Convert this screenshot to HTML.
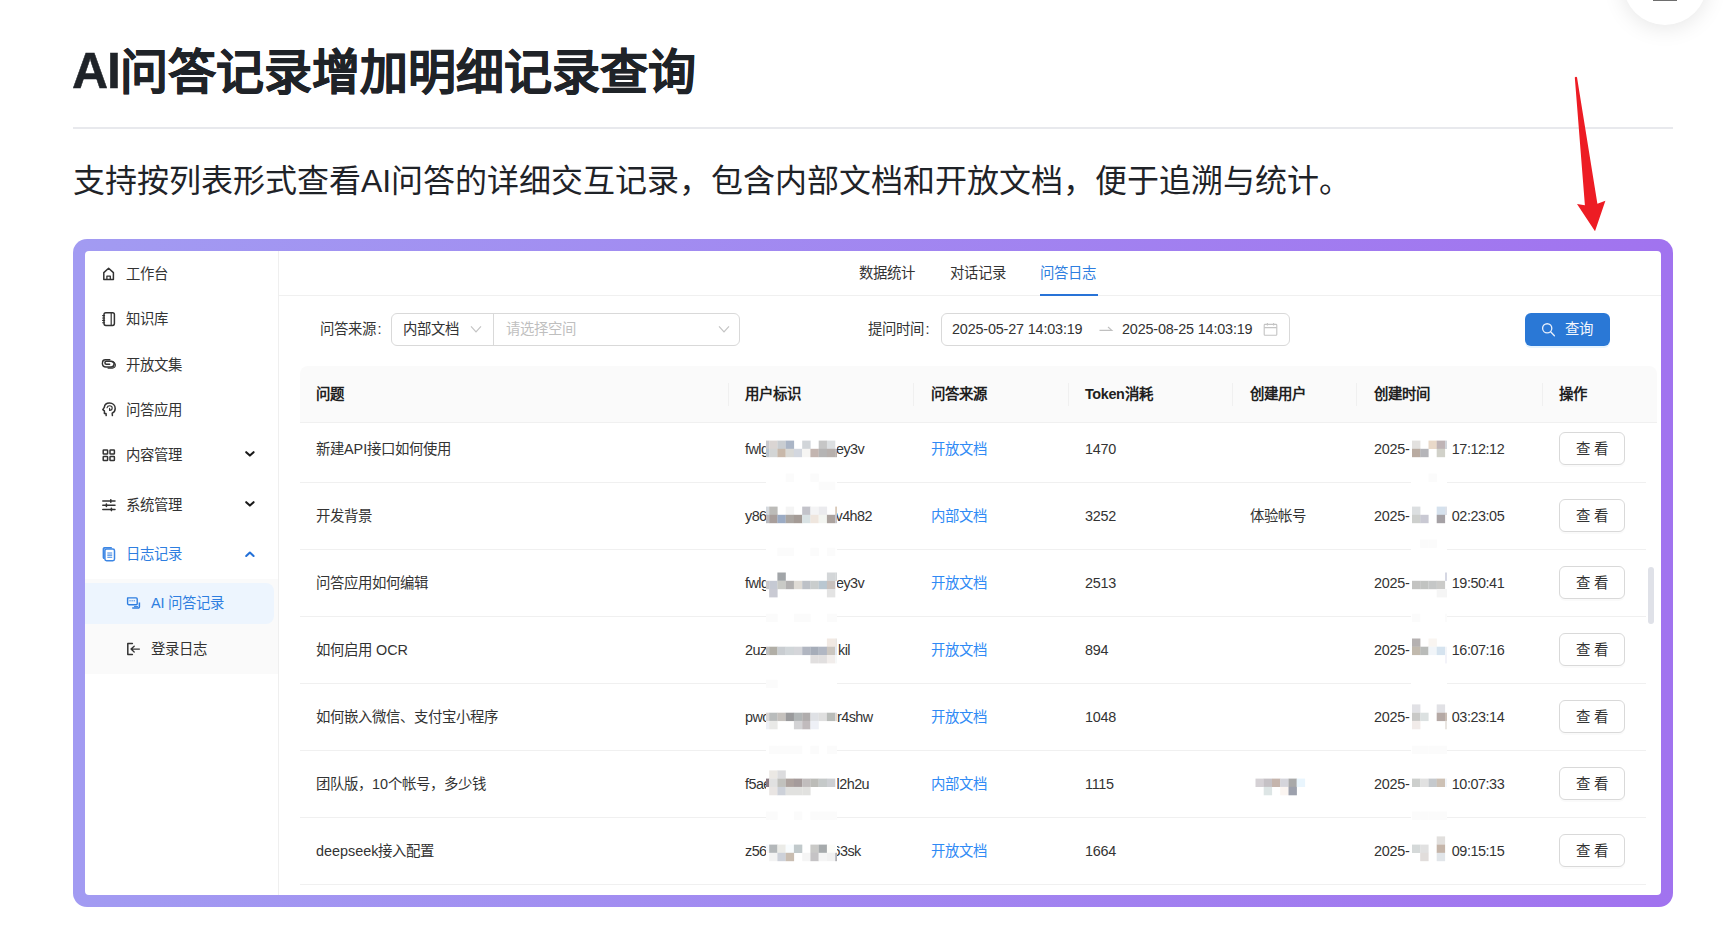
<!DOCTYPE html>
<html lang="zh-CN">
<head>
<meta charset="utf-8">
<title>AI问答记录增加明细记录查询</title>
<style>
html,body{margin:0;padding:0;background:#fff;}
body{width:1732px;height:945px;overflow:hidden;position:relative;font-family:"Liberation Sans",sans-serif;color:#1f2328;}
.abs{position:absolute;white-space:nowrap;}
h1{position:absolute;left:73px;top:36px;margin:0;font-size:48px;line-height:72px;font-weight:700;color:#1f2328;white-space:nowrap;-webkit-text-stroke:.5px #1f2328;}
.hr{position:absolute;left:73px;top:127px;width:1600px;height:2px;background:#e8e9ed;}
.lead{position:absolute;left:73px;top:157px;margin:0;font-size:32px;line-height:48px;color:#1f2328;white-space:nowrap;}
.fab{position:absolute;left:1623px;top:-59.3px;width:84px;height:84px;border-radius:50%;background:#fff;box-shadow:0 3px 22px rgba(0,0,0,.1);}
.fab i{position:absolute;left:30px;top:58.1px;width:24px;height:2px;background:#6e6e6e;}
.frame{position:absolute;left:73px;top:239px;width:1600px;height:668px;border-radius:14px;background:linear-gradient(90deg,#a29bf2,#a173ef);}
.shot{position:absolute;left:12px;top:12px;width:1576px;height:644px;background:#fff;border-radius:4px;overflow:hidden;font-size:14.4px;color:#333;}
.pg{position:absolute;left:-85px;top:-251px;width:1732px;height:945px;}
.pg div,.pg span,.pg svg{position:absolute;white-space:nowrap;}
.t{font-size:14.4px;line-height:20px;height:20px;color:#333;}
.blue{color:#2e7ee0;}
.sb-border{left:278px;top:251px;width:1px;height:644px;background:#efefef;}
.subbg{left:85px;top:579px;width:193px;height:94.5px;background:#fafafa;}
.sel{left:85px;top:582.5px;width:188.5px;height:41.5px;background:#edf5fe;border-radius:0 8px 8px 0;}
.ic{stroke:#333;fill:none;stroke-width:1.5;stroke-linecap:round;stroke-linejoin:round;}
.line{background:#f0f0f0;height:1px;}
.box{border:1px solid #d9d9d9;border-radius:6px;box-sizing:border-box;background:#fff;}
.th{font-size:14.4px;line-height:20px;font-weight:700;color:#1f1f1f;top:384px;}
.vd{width:1px;height:23px;top:383px;background:#f0f0f0;}
.lk{color:#2f8af5;}
.btn{left:1559px;width:65.5px;height:33px;border:1px solid #d9d9d9;border-radius:6px;box-sizing:border-box;background:#fff;box-shadow:0 2px 0 rgba(0,0,0,.02);font-size:14.4px;line-height:32.6px;text-align:center;color:#333;}
.n{letter-spacing:-.25px;}
.tm{letter-spacing:-.45px;}
.a{letter-spacing:-.55px;}
.clip{overflow:hidden;}
</style>
</head>
<body>
<div class="fab"><i></i></div>
<h1><span style="font-size:50px;letter-spacing:-1px;margin-left:-1px;position:relative;top:-1.3px">AI</span>问答记录增加明细记录查询</h1>
<div class="hr"></div>
<p class="lead">支持按列表形式查看AI问答的详细交互记录，包含内部文档和开放文档，便于追溯与统计。</p>
<svg class="abs" style="left:1560px;top:70px" width="60" height="170" viewBox="1560 70 60 170"><path d="M1574.8 77.5 Q1575.8 76.3 1577 77.2 L1597.4 203.8 L1605.4 200.8 L1595 231.2 L1577 204 L1584.9 205.2 Z" fill="#ed1c24"/></svg>
<div class="frame"><div class="shot">
<div class="pg">
<!-- sidebar -->
<div class="sb-border"></div>
<div class="subbg"></div>
<div class="sel"></div>
<svg style="left:101px;top:266px" width="16" height="16" viewBox="0 0 16 16" class="ic"><path d="M2.8 13.4V6.6L7.6 2.3l4.8 4.3v6.8z"/><path d="M5.9 13.4v-3.3h3.4v3.3" stroke-width="1.3"/></svg>
<div class="t" style="left:126px;top:263.8px">工作台</div>
<svg style="left:101px;top:311px" width="16" height="16" viewBox="0 0 16 16" class="ic"><rect x="3" y="1.8" width="10.4" height="12.6" rx="1.8"/><path d="M10.2 2v12.2" stroke-width="1.2"/><path d="M1.6 4.6h2M1.6 7h2M1.6 9.4h2M1.6 11.8h2" stroke-width="1.1"/></svg>
<div class="t" style="left:126px;top:309.2px">知识库</div>
<svg style="left:101px;top:356px" width="16" height="16" viewBox="0 0 16 16" class="ic" stroke-width="1.25"><path d="M8.6 8.2H5.4a1.5 1.5 0 0 1 0-3h4.8a2.9 2.9 0 0 1 0 5.8H5a3.6 3.6 0 0 1-3.6-3.5"/><path d="M1.5 6.4A2.9 2.9 0 0 1 4.4 3.8h4.4"/><path d="M10.8 5.6a4 4 0 0 1 3.6 3.2 3 3 0 0 1-3 3.3H7" stroke-width="1.1"/></svg>
<div class="t" style="left:126px;top:354.6px">开放文集</div>
<svg style="left:101px;top:401px" width="16" height="16" viewBox="0 0 16 16" class="ic" stroke-width="1.25"><path d="M5.2 14.6l-.2-2.2H3.4V9.8L1.8 8.6l1.5-2.2C3.6 3.6 5.6 2 8.4 2c3.3 0 5.8 2.3 5.8 5.4 0 2.2-1.2 3.8-3 4.7l.2 2.5"/><path d="M6 6.8c.3-1.3 1.3-2 2.6-2 1.5 0 2.6 1 2.6 2.3 0 1.5-1.1 2.3-2.6 2.3V7.2" stroke-width="1.1"/></svg>
<div class="t" style="left:126px;top:399.8px">问答应用</div>
<svg style="left:101px;top:447px" width="16" height="16" viewBox="0 0 16 16" class="ic" stroke-width="1.4"><rect x="2.2" y="2.9" width="4.4" height="4.1" rx=".6"/><rect x="9" y="2.9" width="4.4" height="4.1" rx=".6"/><rect x="2.2" y="9.4" width="4.4" height="4.1" rx=".6"/><rect x="9" y="9.4" width="4.4" height="4.1" rx=".6"/></svg>
<div class="t" style="left:126px;top:445.2px">内容管理</div>
<svg style="left:243px;top:448px" width="14" height="12" viewBox="0 0 14 12" fill="none" stroke="#1a1a1a" stroke-width="2.1" stroke-linecap="round" stroke-linejoin="round"><path d="M3.2 4.2l3.7 3.4 3.7-3.4"/></svg>
<svg style="left:101px;top:496.5px" width="16" height="16" viewBox="0 0 16 16" class="ic" stroke-width="1.2" stroke="#444"><path d="M1.8 4h12.2M1.8 8.2h12.2M1.8 12.4h12.2"/><path d="M9.8 2.8v2.4M5.4 7v2.4M10.4 11.2v2.4" stroke-width="1.6"/></svg>
<div class="t" style="left:126px;top:494.6px">系统管理</div>
<svg style="left:243px;top:497.5px" width="14" height="12" viewBox="0 0 14 12" fill="none" stroke="#1a1a1a" stroke-width="2.1" stroke-linecap="round" stroke-linejoin="round"><path d="M3.2 4.2l3.7 3.4 3.7-3.4"/></svg>
<svg style="left:101px;top:546px" width="16" height="16" viewBox="0 0 16 16"><path d="M3.4 1h7.4v1.5H4.2a.8.8 0 0 0-.8.8v9.9a1.8 1.8 0 0 1-1.8-1.8V2.8A1.8 1.8 0 0 1 3.4 1z" fill="#3c86e4"/><rect x="3.9" y="3.1" width="9.6" height="11.7" rx="1.7" fill="#fff" stroke="#3c86e4" stroke-width="1.5"/><path d="M6.3 7h4.9M6.3 9.1h4.9M6.3 11.2h4.9" stroke="#3c86e4" stroke-width="1.05"/></svg>
<div class="t blue" style="left:126px;top:543.8px">日志记录</div>
<svg style="left:243px;top:548px" width="14" height="12" viewBox="0 0 14 12" fill="none" stroke-linecap="round" stroke-linejoin="round"><path d="M3.2 8l3.7-3.4 3.7 3.4" stroke="#2471d8" stroke-width="2.1"/></svg>
<svg style="left:125px;top:595px" width="17" height="16" viewBox="0 0 17 16" fill="none" stroke="#2e7ee0" stroke-width="1.4" stroke-linejoin="round"><path d="M2.6 2.9h8.6a1 1 0 0 1 1 1v4.8a1 1 0 0 1-1 1H5.8l-1.9 0a1.3 1.3 0 0 1-1.3-1.3z"/><path d="M4.4 5.8h6" stroke-width="1" stroke-dasharray="1.3 .8"/><path d="M14.4 7.6v4.2a1.3 1.3 0 0 1-1.3 1.3H7.2" stroke-width="1.5"/><path d="M9 11.6h4" stroke-width="1"/></svg>
<div class="t blue" style="left:151px;top:593.4px;word-spacing:-.5px">AI 问答记录</div>
<svg style="left:125px;top:640.5px" width="17" height="16" viewBox="0 0 17 16" class="ic" stroke-width="1.4" stroke-linecap="butt"><path d="M7.4 2.6H2.8v11h4.6"/><path d="M14.4 8.1H6M9.2 5.2L6 8.1l3.2 2.9" stroke-width="1.3"/></svg>
<div class="t" style="left:151px;top:638.6px">登录日志</div>

<div class="line" style="left:279px;top:295px;width:1382px"></div>
<div class="t" style="left:858.5px;top:262.5px">数据统计</div>
<div class="t" style="left:949.5px;top:262.5px">对话记录</div>
<div class="t" style="left:1040px;top:262.5px;color:#2e7ee0">问答日志</div>
<div style="left:1040px;top:294px;width:58px;height:2.3px;background:#2873d7"></div>
<div class="t" style="left:320px;top:319px">问答来源<span style="position:static;margin-left:1.5px">:</span></div>
<div class="box" style="left:391px;top:313px;width:349px;height:33px"></div>
<div style="left:493px;top:314px;width:1px;height:31px;background:#d9d9d9"></div>
<div class="t" style="left:403px;top:319px">内部文档</div>
<svg style="left:468px;top:322px" width="16" height="14" viewBox="0 0 16 14" fill="none" stroke="#c4c4c4" stroke-width="1.2"><path d="M3 4.4l5 5.4 5-5.4"/></svg>
<div class="t" style="left:505.5px;top:319px;color:#bfbfbf">请选择空间</div>
<svg style="left:715.5px;top:322px" width="16" height="14" viewBox="0 0 16 14" fill="none" stroke="#c4c4c4" stroke-width="1.2"><path d="M3 4.4l5 5.4 5-5.4"/></svg>
<div class="t" style="left:868px;top:319px">提问时间<span style="position:static;margin-left:1.5px">:</span></div>
<div class="box" style="left:940.5px;top:313px;width:349.5px;height:33px"></div>
<div class="t" style="left:952px;top:319px;letter-spacing:-.17px">2025-05-27 14:03:19</div>
<svg style="left:1097px;top:323px" width="18" height="12" viewBox="0 0 18 12" fill="none" stroke="#c0c0c0" stroke-width="1.1"><path d="M2.5 7.4h12.4L11 4"/></svg>
<div class="t" style="left:1122px;top:319px;letter-spacing:-.17px">2025-08-25 14:03:19</div>
<svg style="left:1262px;top:321px" width="17" height="17" viewBox="0 0 17 17" fill="none" stroke="#c4c4c4" stroke-width="1.1"><rect x="2.2" y="3.4" width="12.6" height="10.8" rx=".8"/><path d="M2.2 6.6h12.6M5.4 2v2.6M11.6 2v2.6"/></svg>
<div style="left:1525px;top:313px;width:84.5px;height:33px;border-radius:6px;background:#2a78d6;box-shadow:0 2px 0 rgba(5,145,255,.1)"></div>
<svg style="left:1540px;top:320.5px" width="18" height="18" viewBox="0 0 18 18" fill="none" stroke="#e6eefb" stroke-width="1.35" stroke-linecap="round"><circle cx="7.2" cy="7.3" r="4.6"/><path d="M10.6 10.8l3.8 3.9"/></svg>
<div class="t" style="left:1564.5px;top:319px;color:#f4f7fd;font-weight:500">查询</div>
<div style="left:299.5px;top:366px;width:1357.5px;height:56.5px;background:#fafafa;border-radius:8px 8px 0 0"></div>
<div class="line" style="left:299.5px;top:422px;width:1357.5px"></div>
<div class="th" style="left:316px">问题</div>
<div class="th" style="left:745px">用户标识</div>
<div class="th" style="left:931px">问答来源</div>
<div class="th" style="left:1085px"><span style="position:static;letter-spacing:-.35px">Token</span>消耗</div>
<div class="th" style="left:1250px">创建用户</div>
<div class="th" style="left:1374px">创建时间</div>
<div class="th" style="left:1559px">操作</div>
<div class="vd" style="left:728px"></div>
<div class="vd" style="left:913px"></div>
<div class="vd" style="left:1068px"></div>
<div class="vd" style="left:1232px"></div>
<div class="vd" style="left:1356px"></div>
<div class="vd" style="left:1542px"></div>
<div class="line" style="left:299.5px;top:482px;width:1346px"></div>
<div class="t" style="left:316px;top:438.8px">新建API接口如何使用</div>
<div class="t a" style="left:745px;top:438.8px">fwlg</div>
<div class="t a" style="left:836px;top:438.8px">ey3v</div>
<div class="t lk" style="left:931px;top:438.8px">开放文档</div>
<div class="t n" style="left:1085px;top:438.8px">1470</div>
<div class="t n" style="left:1374px;top:438.8px">2025-</div>
<div class="t tm" style="left:1451.8px;top:438.8px">17:12:12</div>
<div class="btn" style="top:432px">查 看</div>
<div class="line" style="left:299.5px;top:549px;width:1346px"></div>
<div class="t" style="left:316px;top:505.8px">开发背景</div>
<div class="t a" style="left:745px;top:505.8px">y86s</div>
<div class="t a" style="left:835.5px;top:505.8px">v4h82</div>
<div class="t lk" style="left:931px;top:505.8px">内部文档</div>
<div class="t n" style="left:1085px;top:505.8px">3252</div>
<div class="t" style="left:1250px;top:505.8px">体验帐号</div>
<div class="t n" style="left:1374px;top:505.8px">2025-</div>
<div class="t tm" style="left:1451.8px;top:505.8px">02:23:05</div>
<div class="btn" style="top:499px">查 看</div>
<div class="line" style="left:299.5px;top:616px;width:1346px"></div>
<div class="t" style="left:316px;top:572.8px">问答应用如何编辑</div>
<div class="t a" style="left:745px;top:572.8px">fwlg</div>
<div class="t a" style="left:836px;top:572.8px">ey3v</div>
<div class="t lk" style="left:931px;top:572.8px">开放文档</div>
<div class="t n" style="left:1085px;top:572.8px">2513</div>
<div class="t n" style="left:1374px;top:572.8px">2025-</div>
<div class="t tm" style="left:1451.8px;top:572.8px">19:50:41</div>
<div class="btn" style="top:566px">查 看</div>
<div class="line" style="left:299.5px;top:683px;width:1346px"></div>
<div class="t" style="left:316px;top:639.8px">如何启用 OCR</div>
<div class="t a" style="left:745px;top:639.8px">2uz</div>
<div class="t a" style="left:838px;top:639.8px">kil</div>
<div class="t lk" style="left:931px;top:639.8px">开放文档</div>
<div class="t n" style="left:1085px;top:639.8px">894</div>
<div class="t n" style="left:1374px;top:639.8px">2025-</div>
<div class="t tm" style="left:1451.8px;top:639.8px">16:07:16</div>
<div class="btn" style="top:633px">查 看</div>
<div class="line" style="left:299.5px;top:750px;width:1346px"></div>
<div class="t" style="left:316px;top:706.8px">如何嵌入微信、支付宝小程序</div>
<div class="t a" style="left:745px;top:706.8px">pwc</div>
<div class="t a" style="left:837px;top:706.8px">r4shw</div>
<div class="t lk" style="left:931px;top:706.8px">开放文档</div>
<div class="t n" style="left:1085px;top:706.8px">1048</div>
<div class="t n" style="left:1374px;top:706.8px">2025-</div>
<div class="t tm" style="left:1451.8px;top:706.8px">03:23:14</div>
<div class="btn" style="top:700px">查 看</div>
<div class="line" style="left:299.5px;top:817px;width:1346px"></div>
<div class="t" style="left:316px;top:773.8px">团队版，10个帐号，多少钱</div>
<div class="t a" style="left:745px;top:773.8px">f5ae</div>
<div class="t a" style="left:836.6px;top:773.8px">l2h2u</div>
<div class="t lk" style="left:931px;top:773.8px">内部文档</div>
<div class="t n" style="left:1085px;top:773.8px">1115</div>
<div class="t n" style="left:1374px;top:773.8px">2025-</div>
<div class="t tm" style="left:1451.8px;top:773.8px">10:07:33</div>
<div class="btn" style="top:767px">查 看</div>
<div class="line" style="left:299.5px;top:884px;width:1346px"></div>
<div class="t" style="left:316px;top:840.8px">deepseek接入配置</div>
<div class="t a" style="left:745px;top:840.8px">z56</div>
<div class="t a" style="left:832.5px;top:840.8px">63sk</div>
<div class="t lk" style="left:931px;top:840.8px">开放文档</div>
<div class="t n" style="left:1085px;top:840.8px">1664</div>
<div class="t n" style="left:1374px;top:840.8px">2025-</div>
<div class="t tm" style="left:1451.8px;top:840.8px">09:15:15</div>
<div class="btn" style="top:834px">查 看</div>
<svg style="left:766px;top:432px" width="71" height="434" viewBox="766 432 71 434"><rect x="766" y="432" width="71" height="434" fill="#fff"/><rect x="766.0" y="440.6" width="3.35" height="8.39" fill="#c9c9cd"/><rect x="769.2" y="440.6" width="8.40" height="8.39" fill="#dad5d3"/><rect x="777.4" y="440.6" width="8.40" height="8.39" fill="#c9cdd1"/><rect x="785.7" y="440.6" width="8.40" height="8.39" fill="#aab5c6"/><rect x="802.2" y="440.6" width="8.40" height="8.39" fill="#d1d5d9"/><rect x="818.7" y="440.6" width="8.40" height="8.39" fill="#c6c6c6"/><rect x="826.9" y="440.6" width="8.40" height="8.39" fill="#dcdfe1"/><rect x="766.0" y="448.8" width="3.35" height="8.39" fill="#b9c5d0"/><rect x="769.2" y="448.8" width="8.40" height="8.39" fill="#d3d5d5"/><rect x="777.4" y="448.8" width="8.40" height="8.39" fill="#c8b8aa"/><rect x="785.7" y="448.8" width="8.40" height="8.39" fill="#d9d9d6"/><rect x="793.9" y="448.8" width="8.40" height="8.39" fill="#d3d7df"/><rect x="802.2" y="448.8" width="8.40" height="8.39" fill="#f6f5f3"/><rect x="810.4" y="448.8" width="8.40" height="8.39" fill="#c3b5b0"/><rect x="818.7" y="448.8" width="8.40" height="8.39" fill="#b5b4b4"/><rect x="826.9" y="448.8" width="8.40" height="8.39" fill="#b7b0ad"/><rect x="835.2" y="448.8" width="1.99" height="8.39" fill="#b7b0ad"/><rect x="785.7" y="473.6" width="8.40" height="8.39" fill="#fbfbfb"/><rect x="810.4" y="473.6" width="8.40" height="8.39" fill="#fbfbfb"/><rect x="818.7" y="481.8" width="8.40" height="8.39" fill="#fbfbfb"/><rect x="826.9" y="481.8" width="8.40" height="8.39" fill="#fbfbfb"/><rect x="766.0" y="506.6" width="3.35" height="8.39" fill="#d5d9de"/><rect x="769.2" y="506.6" width="8.40" height="8.39" fill="#bcbbb8"/><rect x="785.7" y="506.6" width="8.40" height="8.39" fill="#f4f4f4"/><rect x="802.2" y="506.6" width="8.40" height="8.39" fill="#c3c3ca"/><rect x="810.4" y="506.6" width="8.40" height="8.39" fill="#f4f4f5"/><rect x="818.7" y="506.6" width="8.40" height="8.39" fill="#ebebee"/><rect x="835.2" y="506.6" width="1.99" height="8.39" fill="#d9c9b9"/><rect x="766.0" y="514.8" width="3.35" height="8.39" fill="#b9b9bd"/><rect x="769.2" y="514.8" width="8.40" height="8.39" fill="#a89e9b"/><rect x="777.4" y="514.8" width="8.40" height="8.39" fill="#9babc4"/><rect x="785.7" y="514.8" width="8.40" height="8.39" fill="#aaa5a1"/><rect x="793.9" y="514.8" width="8.40" height="8.39" fill="#a49b96"/><rect x="802.2" y="514.8" width="8.40" height="8.39" fill="#d9e2e4"/><rect x="810.4" y="514.8" width="8.40" height="8.39" fill="#efe6de"/><rect x="818.7" y="514.8" width="8.40" height="8.39" fill="#f3f5f1"/><rect x="826.9" y="514.8" width="8.40" height="8.39" fill="#aba29e"/><rect x="835.2" y="514.8" width="1.99" height="8.39" fill="#c0c0c8"/><rect x="777.4" y="547.8" width="8.40" height="8.39" fill="#fbfbfb"/><rect x="785.7" y="547.8" width="8.40" height="8.39" fill="#fbfbfb"/><rect x="810.4" y="547.8" width="8.40" height="8.39" fill="#fbfbfb"/><rect x="826.9" y="547.8" width="8.40" height="8.39" fill="#fbfbfb"/><rect x="777.4" y="572.5" width="8.40" height="8.39" fill="#a1a5a8"/><rect x="826.9" y="572.5" width="8.40" height="8.39" fill="#d3d6d8"/><rect x="835.2" y="572.5" width="1.99" height="8.39" fill="#d3d6d8"/><rect x="766.0" y="580.8" width="3.35" height="8.39" fill="#c9c9cd"/><rect x="769.2" y="580.8" width="8.40" height="8.39" fill="#c5c9d3"/><rect x="777.4" y="580.8" width="8.40" height="8.39" fill="#c9cac6"/><rect x="785.7" y="580.8" width="8.40" height="8.39" fill="#b2b0b0"/><rect x="793.9" y="580.8" width="8.40" height="8.39" fill="#dfdbd5"/><rect x="802.2" y="580.8" width="8.40" height="8.39" fill="#bdc1c7"/><rect x="810.4" y="580.8" width="8.40" height="8.39" fill="#c9cdcd"/><rect x="818.7" y="580.8" width="8.40" height="8.39" fill="#b9c7d1"/><rect x="826.9" y="580.8" width="8.40" height="8.39" fill="#c9c1bd"/><rect x="769.2" y="589.0" width="8.40" height="8.39" fill="#c9cad3"/><rect x="826.9" y="589.0" width="8.40" height="8.39" fill="#e3e3e3"/><rect x="766.0" y="613.7" width="3.35" height="8.39" fill="#fbfbfb"/><rect x="769.2" y="613.7" width="8.40" height="8.39" fill="#fbfbfb"/><rect x="793.9" y="613.7" width="8.40" height="8.39" fill="#fbfbfb"/><rect x="802.2" y="613.7" width="8.40" height="8.39" fill="#fbfbfb"/><rect x="826.9" y="613.7" width="8.40" height="8.39" fill="#fbfbfb"/><rect x="835.2" y="613.7" width="1.99" height="8.39" fill="#fbfbfb"/><rect x="826.9" y="638.5" width="8.40" height="8.39" fill="#f1e9e3"/><rect x="835.2" y="638.5" width="1.99" height="8.39" fill="#e9e5e1"/><rect x="766.0" y="646.7" width="3.35" height="8.39" fill="#c1c1c1"/><rect x="769.2" y="646.7" width="8.40" height="8.39" fill="#b1aea6"/><rect x="777.4" y="646.7" width="8.40" height="8.39" fill="#c9cdd1"/><rect x="785.7" y="646.7" width="8.40" height="8.39" fill="#d1d6d9"/><rect x="793.9" y="646.7" width="8.40" height="8.39" fill="#d5d6da"/><rect x="802.2" y="646.7" width="8.40" height="8.39" fill="#b1b6c1"/><rect x="810.4" y="646.7" width="8.40" height="8.39" fill="#a6adb9"/><rect x="818.7" y="646.7" width="8.40" height="8.39" fill="#b1b7c3"/><rect x="826.9" y="646.7" width="8.40" height="8.39" fill="#cbc6c0"/><rect x="835.2" y="646.7" width="1.99" height="8.39" fill="#dfe9f5"/><rect x="810.4" y="655.0" width="8.40" height="8.39" fill="#e1dfdf"/><rect x="818.7" y="655.0" width="8.40" height="8.39" fill="#e1dfdf"/><rect x="826.9" y="655.0" width="8.40" height="8.39" fill="#f1edeb"/><rect x="835.2" y="655.0" width="1.99" height="8.39" fill="#f6f8f8"/><rect x="766.0" y="679.7" width="3.35" height="8.39" fill="#fbfbfb"/><rect x="769.2" y="679.7" width="8.40" height="8.39" fill="#fbfbfb"/><rect x="766.0" y="712.7" width="3.35" height="8.39" fill="#d9d5d3"/><rect x="769.2" y="712.7" width="8.40" height="8.39" fill="#b9bcbc"/><rect x="777.4" y="712.7" width="8.40" height="8.39" fill="#c5c1bd"/><rect x="785.7" y="712.7" width="8.40" height="8.39" fill="#9a9a9c"/><rect x="793.9" y="712.7" width="8.40" height="8.39" fill="#b1b5b6"/><rect x="802.2" y="712.7" width="8.40" height="8.39" fill="#b0adad"/><rect x="810.4" y="712.7" width="8.40" height="8.39" fill="#dfe1e5"/><rect x="818.7" y="712.7" width="8.40" height="8.39" fill="#dfdfdf"/><rect x="826.9" y="712.7" width="8.40" height="8.39" fill="#b9bcb9"/><rect x="835.2" y="712.7" width="1.99" height="8.39" fill="#dcd9d9"/><rect x="766.0" y="720.9" width="3.35" height="8.39" fill="#eef0f6"/><rect x="769.2" y="720.9" width="8.40" height="8.39" fill="#e9e9e7"/><rect x="793.9" y="720.9" width="8.40" height="8.39" fill="#d3d3d5"/><rect x="802.2" y="720.9" width="8.40" height="8.39" fill="#c1bbbd"/><rect x="810.4" y="720.9" width="8.40" height="8.39" fill="#eef0f6"/><rect x="769.2" y="745.7" width="8.40" height="8.39" fill="#fbfbfb"/><rect x="777.4" y="745.7" width="8.40" height="8.39" fill="#fbfbfb"/><rect x="785.7" y="745.7" width="8.40" height="8.39" fill="#fbfbfb"/><rect x="793.9" y="745.7" width="8.40" height="8.39" fill="#fbfbfb"/><rect x="810.4" y="745.7" width="8.40" height="8.39" fill="#fbfbfb"/><rect x="826.9" y="745.7" width="8.40" height="8.39" fill="#fbfbfb"/><rect x="835.2" y="745.7" width="1.99" height="8.39" fill="#fbfbfb"/><rect x="769.2" y="770.4" width="8.40" height="8.39" fill="#ebe8e4"/><rect x="777.4" y="770.4" width="8.40" height="8.39" fill="#dcdcde"/><rect x="766.0" y="778.6" width="3.35" height="8.39" fill="#8b7b83"/><rect x="769.2" y="778.6" width="8.40" height="8.39" fill="#e1e1e1"/><rect x="777.4" y="778.6" width="8.40" height="8.39" fill="#c1c1bd"/><rect x="785.7" y="778.6" width="8.40" height="8.39" fill="#ada29e"/><rect x="793.9" y="778.6" width="8.40" height="8.39" fill="#a59b9b"/><rect x="802.2" y="778.6" width="8.40" height="8.39" fill="#c1bdbd"/><rect x="810.4" y="778.6" width="8.40" height="8.39" fill="#bcbcb8"/><rect x="818.7" y="778.6" width="8.40" height="8.39" fill="#c5c9c9"/><rect x="826.9" y="778.6" width="8.40" height="8.39" fill="#cdcfd3"/><rect x="769.2" y="786.9" width="8.40" height="8.39" fill="#e9e5e3"/><rect x="777.4" y="786.9" width="8.40" height="8.39" fill="#cdd1d9"/><rect x="785.7" y="786.9" width="8.40" height="8.39" fill="#e1e1df"/><rect x="793.9" y="786.9" width="8.40" height="8.39" fill="#e1e1df"/><rect x="802.2" y="786.9" width="8.40" height="8.39" fill="#e1e1df"/><rect x="766.0" y="811.6" width="3.35" height="8.39" fill="#fbfbfb"/><rect x="769.2" y="811.6" width="8.40" height="8.39" fill="#fbfbfb"/><rect x="793.9" y="811.6" width="8.40" height="8.39" fill="#fbfbfb"/><rect x="810.4" y="811.6" width="8.40" height="8.39" fill="#fbfbfb"/><rect x="818.7" y="811.6" width="8.40" height="8.39" fill="#fbfbfb"/><rect x="826.9" y="811.6" width="8.40" height="8.39" fill="#fbfbfb"/><rect x="835.2" y="811.6" width="1.99" height="8.39" fill="#fbfbfb"/><rect x="766.0" y="844.6" width="3.35" height="8.39" fill="#f6f8fa"/><rect x="769.2" y="844.6" width="8.40" height="8.39" fill="#b3b7b9"/><rect x="777.4" y="844.6" width="8.40" height="8.39" fill="#ebebe7"/><rect x="785.7" y="844.6" width="8.40" height="8.39" fill="#f8fcfe"/><rect x="793.9" y="844.6" width="8.40" height="8.39" fill="#c1c9cb"/><rect x="810.4" y="844.6" width="8.40" height="8.39" fill="#c9c9c7"/><rect x="818.7" y="844.6" width="8.40" height="8.39" fill="#a6aaac"/><rect x="826.9" y="844.6" width="8.40" height="8.39" fill="#fdfdf9"/><rect x="769.2" y="852.8" width="8.40" height="8.39" fill="#f3f3f3"/><rect x="777.4" y="852.8" width="8.40" height="8.39" fill="#cdd1d9"/><rect x="785.7" y="852.8" width="8.40" height="8.39" fill="#c9bdb1"/><rect x="802.2" y="852.8" width="8.40" height="8.39" fill="#f5f5f5"/><rect x="810.4" y="852.8" width="8.40" height="8.39" fill="#c5c3c5"/><rect x="818.7" y="852.8" width="8.40" height="8.39" fill="#f5f5f5"/><rect x="826.9" y="852.8" width="8.40" height="8.39" fill="#f1f1f1"/><rect x="835.2" y="852.8" width="1.99" height="8.39" fill="#b1b1b5"/></svg>
<svg style="left:1411px;top:432px" width="36" height="434" viewBox="1411 432 36 434"><rect x="1411" y="432" width="36" height="434" fill="#fff"/><rect x="1412.0" y="440.6" width="8.39" height="8.39" fill="#e3e1df"/><rect x="1428.5" y="440.6" width="8.39" height="8.39" fill="#e9d9c9"/><rect x="1436.7" y="440.6" width="8.40" height="8.39" fill="#bfb4b6"/><rect x="1445.0" y="440.6" width="2.17" height="8.39" fill="#d1d5db"/><rect x="1412.0" y="448.8" width="8.39" height="8.39" fill="#b9aba1"/><rect x="1420.2" y="448.8" width="8.40" height="8.39" fill="#b5b5b9"/><rect x="1436.7" y="448.8" width="8.40" height="8.39" fill="#d1d1c9"/><rect x="1428.5" y="473.6" width="8.39" height="8.39" fill="#fbfbfb"/><rect x="1412.0" y="506.6" width="8.39" height="8.39" fill="#dcdfe1"/><rect x="1436.7" y="506.6" width="8.40" height="8.39" fill="#d5e1ed"/><rect x="1445.0" y="506.6" width="2.17" height="8.39" fill="#dde1e9"/><rect x="1412.0" y="514.8" width="8.39" height="8.39" fill="#cdcfcd"/><rect x="1420.2" y="514.8" width="8.40" height="8.39" fill="#c9c9d3"/><rect x="1436.7" y="514.8" width="8.40" height="8.39" fill="#a5a1a5"/><rect x="1420.2" y="539.5" width="8.40" height="8.39" fill="#fbfbfb"/><rect x="1428.5" y="539.5" width="8.39" height="8.39" fill="#fbfbfb"/><rect x="1445.0" y="572.5" width="2.17" height="8.39" fill="#d5d7e3"/><rect x="1412.0" y="580.8" width="8.39" height="8.39" fill="#c3c3c1"/><rect x="1420.2" y="580.8" width="8.40" height="8.39" fill="#c1c3c1"/><rect x="1428.5" y="580.8" width="8.39" height="8.39" fill="#c5c7c7"/><rect x="1436.7" y="580.8" width="8.40" height="8.39" fill="#cbcbc9"/><rect x="1436.7" y="589.0" width="8.40" height="8.39" fill="#f5f5f5"/><rect x="1445.0" y="589.0" width="2.17" height="8.39" fill="#f5f5f5"/><rect x="1412.0" y="613.7" width="8.39" height="8.39" fill="#fbfbfb"/><rect x="1445.0" y="613.7" width="2.17" height="8.39" fill="#fbfbfb"/><rect x="1412.0" y="638.5" width="8.39" height="8.39" fill="#b5b1b1"/><rect x="1428.5" y="638.5" width="8.39" height="8.39" fill="#f9f5f1"/><rect x="1412.0" y="646.7" width="8.39" height="8.39" fill="#c1b9ad"/><rect x="1420.2" y="646.7" width="8.40" height="8.39" fill="#b9bbb9"/><rect x="1428.5" y="646.7" width="8.39" height="8.39" fill="#f1f5f9"/><rect x="1436.7" y="646.7" width="8.40" height="8.39" fill="#d5e3ef"/><rect x="1445.0" y="646.7" width="2.17" height="8.39" fill="#f3f5f9"/><rect x="1445.0" y="655.0" width="2.17" height="8.39" fill="#f3f3f9"/><rect x="1412.0" y="704.4" width="8.39" height="8.39" fill="#e1e1e5"/><rect x="1436.7" y="704.4" width="8.40" height="8.39" fill="#e1e1e5"/><rect x="1412.0" y="712.7" width="8.39" height="8.39" fill="#c9c9c7"/><rect x="1420.2" y="712.7" width="8.40" height="8.39" fill="#dce1e1"/><rect x="1436.7" y="712.7" width="8.40" height="8.39" fill="#b5a9a5"/><rect x="1445.0" y="712.7" width="2.17" height="8.39" fill="#c9bdb5"/><rect x="1412.0" y="720.9" width="8.39" height="8.39" fill="#f1ebe9"/><rect x="1445.0" y="720.9" width="2.17" height="8.39" fill="#e9e5e1"/><rect x="1412.0" y="745.7" width="8.39" height="8.39" fill="#fbfbfb"/><rect x="1420.2" y="745.7" width="8.40" height="8.39" fill="#fbfbfb"/><rect x="1428.5" y="745.7" width="8.39" height="8.39" fill="#fbfbfb"/><rect x="1436.7" y="745.7" width="8.40" height="8.39" fill="#fbfbfb"/><rect x="1445.0" y="745.7" width="2.17" height="8.39" fill="#fbfbfb"/><rect x="1412.0" y="778.6" width="8.39" height="8.39" fill="#cdcfcd"/><rect x="1420.2" y="778.6" width="8.40" height="8.39" fill="#e1e1e1"/><rect x="1428.5" y="778.6" width="8.39" height="8.39" fill="#c5c9cd"/><rect x="1436.7" y="778.6" width="8.40" height="8.39" fill="#cdc1b5"/><rect x="1445.0" y="778.6" width="2.17" height="8.39" fill="#f1f5fb"/><rect x="1412.0" y="811.6" width="8.39" height="8.39" fill="#fbfbfb"/><rect x="1420.2" y="811.6" width="8.40" height="8.39" fill="#fbfbfb"/><rect x="1428.5" y="811.6" width="8.39" height="8.39" fill="#fbfbfb"/><rect x="1436.7" y="811.6" width="8.40" height="8.39" fill="#fbfbfb"/><rect x="1445.0" y="811.6" width="2.17" height="8.39" fill="#fbfbfb"/><rect x="1436.7" y="836.4" width="8.40" height="8.39" fill="#e1dfdd"/><rect x="1412.0" y="844.6" width="8.39" height="8.39" fill="#d5d9d9"/><rect x="1420.2" y="844.6" width="8.40" height="8.39" fill="#e1e1e1"/><rect x="1436.7" y="844.6" width="8.40" height="8.39" fill="#c5b5a9"/><rect x="1420.2" y="852.8" width="8.40" height="8.39" fill="#e1dddb"/><rect x="1436.7" y="852.8" width="8.40" height="8.39" fill="#e1e5e9"/></svg>
<svg style="left:1255px;top:778px" width="51" height="18" viewBox="1255 778 51 18"><rect x="1255.5" y="778.6" width="8.39" height="8.39" fill="#d5d1d5"/><rect x="1263.7" y="778.6" width="8.40" height="8.39" fill="#c5c1c5"/><rect x="1272.0" y="778.6" width="8.39" height="8.39" fill="#c5b5ad"/><rect x="1280.2" y="778.6" width="8.40" height="8.39" fill="#d5d5db"/><rect x="1288.5" y="778.6" width="8.39" height="8.39" fill="#a9a9a9"/><rect x="1296.7" y="778.6" width="8.40" height="8.39" fill="#e9f5fd"/><rect x="1263.7" y="786.9" width="8.40" height="8.39" fill="#dde5e5"/><rect x="1280.2" y="786.9" width="8.40" height="8.39" fill="#fbf5f1"/><rect x="1288.5" y="786.9" width="8.39" height="8.39" fill="#9da1ad"/></svg>
<div style="left:1648.3px;top:566.5px;width:5.5px;height:57px;border-radius:3px;background:#dfe1e8"></div>
</div>
</div></div>
</body>
</html>
